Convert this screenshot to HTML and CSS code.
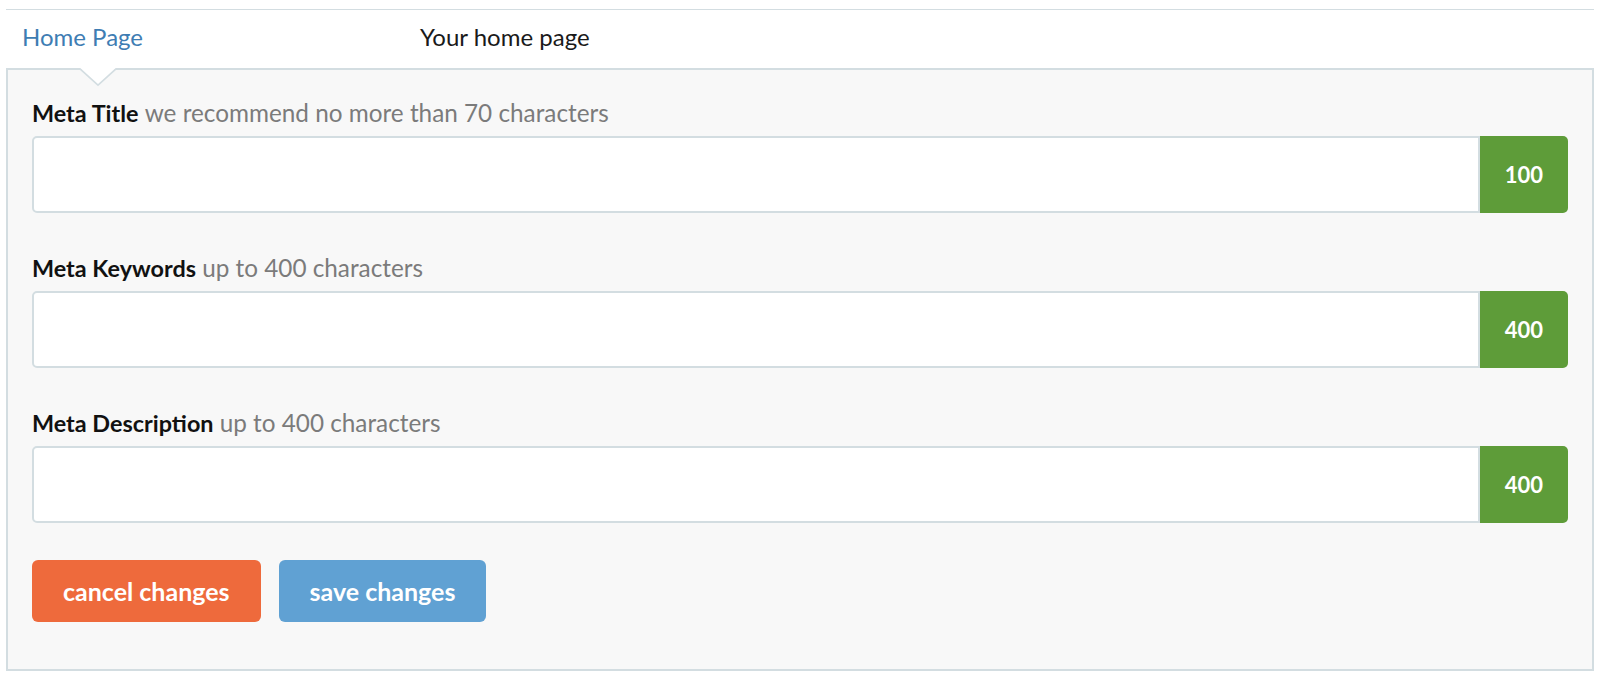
FILE: index.html
```html
<!DOCTYPE html>
<html>
<head>
<meta charset="utf-8">
<link rel="stylesheet" href="styles.css">
</head>
<body>
<div class="page">
  <div class="tabs">
    <a class="tab-link" href="#">Home Page</a>
    <span class="tab-desc">Your home page</span>
  </div>
  <div class="panel">
    <svg class="notch" width="36" height="19" viewBox="0 0 36 19">
      <polygon points="0,0 18,17 36,0" fill="#ffffff"/>
      <polyline points="0,0.8 18,17.2 36,0.8" fill="none" stroke="#d3dde1" stroke-width="1.6"/>
    </svg>
    <div class="field">
      <div class="label"><b>Meta Title</b> <span class="hint">we recommend no more than 70 characters</span></div>
      <div class="input-group">
        <div class="input"></div>
        <div class="addon">100</div>
      </div>
    </div>
    <div class="field">
      <div class="label"><b>Meta Keywords</b> <span class="hint">up to 400 characters</span></div>
      <div class="input-group">
        <div class="input"></div>
        <div class="addon">400</div>
      </div>
    </div>
    <div class="field">
      <div class="label"><b>Meta Description</b> <span class="hint">up to 400 characters</span></div>
      <div class="input-group">
        <div class="input"></div>
        <div class="addon">400</div>
      </div>
    </div>
    <div class="actions">
      <button class="btn btn-cancel">cancel changes</button>
      <button class="btn btn-save">save changes</button>
    </div>
  </div>
</div>
</body>
</html>
```

FILE: styles.css
```css
* { box-sizing: border-box; }
html, body { margin: 0; padding: 0; background: #ffffff; }
body {
  font-family: "Lato", "Liberation Sans", sans-serif;
  color: #1a1a1a;
}
.page {
  padding: 9px 10px 0 6px;
}
.tabs {
  border-top: 1px solid #d3dde1;
  height: 59px;
  display: flex;
  align-items: center;
  padding-left: 16px;
  padding-bottom: 6px;
  font-size: 24px;
}
.tab-link {
  color: #3e7db3;
  text-decoration: none;
  width: 398px;
}
.tab-desc {
  color: #1a1a1a;
}
.panel {
  position: relative;
  background: #f8f8f8;
  border: 2px solid #d3dde1;
  padding: 28px 24px 47px 24px;
}
.notch {
  position: absolute;
  left: 72px;
  top: -2px;
  display: block;
}
.field + .field {
  margin-top: 40px;
}
.label {
  font-size: 24px;
  line-height: 30px;
  margin-bottom: 8px;
}
.label b {
  font-weight: 700;
  font-size: 23.4px;
  color: #111111;
}
.hint {
  color: #7b7b7b;
  font-size: 24.3px;
}
.input-group {
  display: flex;
  height: 77px;
}
.input {
  flex: 1;
  background: #ffffff;
  border: 2px solid #d3dde1;
  border-radius: 5px 0 0 5px;
}
.addon {
  background: #5e9c39;
  color: #ffffff;
  font-weight: 700;
  font-size: 22px;
  padding: 0 25px;
  display: flex;
  align-items: center;
  justify-content: center;
  border-radius: 0 5px 5px 0;
}
.actions {
  display: flex;
  gap: 18px;
  margin-top: 37px;
}
.btn {
  font-family: "Lato", "Liberation Sans", sans-serif;
  font-weight: 700;
  font-size: 25px;
  color: #ffffff;
  border: none;
  border-radius: 6px;
  height: 62px;
  padding: 0 31px;
}
.btn-cancel { background: #ee6a3c; }
.btn-save { background: #60a1d3; }
```
